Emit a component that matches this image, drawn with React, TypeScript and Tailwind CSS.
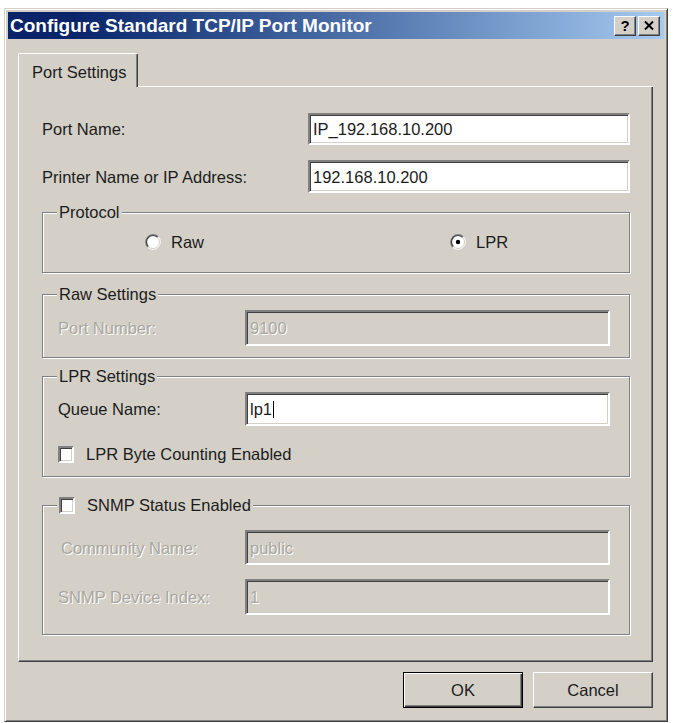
import React from 'react';

// classic win2000 look: face #d4d0c8, shadow #808080, dark #404040
const sunken =
  'border-2 border-[#808080] border-r-white border-b-white shadow-[inset_1px_1px_0_#404040,inset_-1px_-1px_0_#d4d0c8]';

const etched =
  'border border-[#808080] shadow-[inset_1px_1px_0_#fff,1px_1px_0_#fff]';

const dimText = 'text-[#aaa7a0] [text-shadow:1px_1px_0_#fff]';

interface FieldProps {
  value: string;
  disabled?: boolean;
  caret?: boolean;
  className?: string;
}

const Field: React.FC<FieldProps> = ({ value, disabled, caret, className }) => (
  <div
    className={`${sunken} flex items-center pl-[3px] ${disabled ? 'bg-[#d4d0c8]' : 'bg-white'} ${className ?? ''}`}
  >
    <span className={disabled ? dimText : 'text-[#1c1c1c]'}>{value}</span>
    {caret && <span className="ml-[1px] h-[17px] w-[1px] bg-black" />}
  </div>
);

const Radio = ({ checked }: { checked?: boolean }) => (
  <svg width="16" height="16" viewBox="0 0 16 16" className="shrink-0">
    <circle cx="8" cy="8" r="7" fill="#fff" />
    <path d="M2.7 13.3 A7.5 7.5 0 0 1 13.3 2.7" stroke="#808080" strokeWidth="1.2" fill="none" />
    <path d="M3.4 12.6 A6.5 6.5 0 0 1 12.6 3.4" stroke="#404040" strokeWidth="1.2" fill="none" />
    <path d="M13.3 2.7 A7.5 7.5 0 0 1 2.7 13.3" stroke="#fff" strokeWidth="1" fill="none" />
    <path d="M12.6 3.4 A6.5 6.5 0 0 1 3.4 12.6" stroke="#d4d0c8" strokeWidth="1" fill="none" />
    {checked && <circle cx="8" cy="8" r="2.2" fill="#000" />}
  </svg>
);

const Checkbox = () => <div className={`${sunken} h-[17px] w-[16px] shrink-0 bg-white`} />;

const CaptionButton = ({ children }: { children: React.ReactNode }) => (
  <div className="flex h-[20px] w-[22px] items-center justify-center border border-t-white border-l-white border-r-[#404040] border-b-[#404040] bg-[#d4d0c8] shadow-[inset_-1px_-1px_0_#808080]">
    {children}
  </div>
);

export default function App() {
  return (
    <div className="min-h-screen bg-white pl-[4px] pt-[8px] font-['Liberation_Sans',Arial,sans-serif] text-[16.5px] leading-[18px] text-[#1c1c1c]">
      <div className="flex h-[714px] w-[664px] flex-col border border-[#d4d0c8] border-r-[#404040] border-b-[#404040] bg-[#d4d0c8] p-[3px] shadow-[inset_1px_1px_0_#fff,inset_-1px_-1px_0_#808080]">
        {/* title bar */}
        <div className="flex h-[27px] shrink-0 items-center bg-linear-to-r from-[#0a246a] from-10% to-[#a6caf0] pl-[2px] pr-[4px]">
          <span className="text-[19px] font-bold text-white">
            Configure Standard TCP/IP Port Monitor
          </span>
          <div className="ml-auto flex gap-[2px]">
            <CaptionButton>
              <span className="text-[15px] font-bold leading-none text-black">?</span>
            </CaptionButton>
            <CaptionButton>
              <svg width="10" height="9" viewBox="0 0 10 9">
                <path d="M1 0.5 L9 8.5 M9 0.5 L1 8.5" stroke="#000" strokeWidth="2" />
              </svg>
            </CaptionButton>
          </div>
        </div>

        <div className="flex flex-1 flex-col pl-[10px] pr-[11px]">
          {/* tabs */}
          <div className="mt-[14px] flex h-[34px] shrink-0">
            <div className="flex w-[120px] items-center rounded-t-[2px] border-t border-l border-white border-r border-r-[#404040] pl-[13px] pt-[2px] shadow-[inset_-1px_0_0_#808080]">
              Port Settings
            </div>
            <div className="flex-1 border-b border-white" />
          </div>

          {/* tab page */}
          <div className="flex h-[575px] shrink-0 flex-col border-l border-white border-r border-r-[#404040] border-b border-b-[#404040] pl-[23px] pr-[22px] pt-[26px] shadow-[inset_-1px_-1px_0_#808080]">
            <div className="flex items-center justify-between">
              <span>Port Name:</span>
              <Field value="IP_192.168.10.200" className="h-[32px] w-[322px]" />
            </div>
            <div className="mt-[15px] flex items-center justify-between">
              <span>Printer Name or IP Address:</span>
              <Field value="192.168.10.200" className="h-[33px] w-[322px]" />
            </div>

            <fieldset className={`${etched} mt-[10px] px-[14px] pb-[20px]`}>
              <legend className="bg-[#d4d0c8] px-[2px]">Protocol</legend>
              <div className="mt-[11px] flex h-[20px] items-center">
                <div className="ml-[88px] flex w-[305px] items-center gap-[10px]">
                  <Radio />
                  <span>Raw</span>
                </div>
                <div className="flex items-center gap-[10px]">
                  <Radio checked />
                  <span>LPR</span>
                </div>
              </div>
            </fieldset>

            <fieldset className={`${etched} mt-[12px] px-[14px] pb-[11px]`}>
              <legend className="bg-[#d4d0c8] px-[2px]">Raw Settings</legend>
              <div className="mt-[7px] flex items-center">
                <span className={`w-[188px] pl-[1px] ${dimText}`}>Port Number:</span>
                <Field value="9100" disabled className="h-[36px] w-[365px]" />
              </div>
            </fieldset>

            <fieldset className={`${etched} mt-[9px] px-[14px] pb-[12px]`}>
              <legend className="bg-[#d4d0c8] px-[2px]">LPR Settings</legend>
              <div className="mt-[7px] flex items-center">
                <span className="w-[188px] pl-[1px]">Queue Name:</span>
                <Field value="lp1" caret className="h-[34px] w-[365px]" />
              </div>
              <div className="mt-[18px] flex h-[20px] items-center gap-[12px] pl-[1px]">
                <Checkbox />
                <span>LPR Byte Counting Enabled</span>
              </div>
            </fieldset>

            <fieldset className={`${etched} mt-[18px] px-[14px] pb-[19px]`}>
              <legend className="bg-[#d4d0c8] px-[2px]">
                <div className="flex h-[20px] items-center gap-[12px]">
                  <Checkbox />
                  <span>SNMP Status Enabled</span>
                </div>
              </legend>
              <div className="mt-[15px] flex items-center">
                <span className={`w-[188px] pl-[4px] ${dimText}`}>Community Name:</span>
                <Field value="public" disabled className="h-[35px] w-[365px]" />
              </div>
              <div className="mt-[14px] flex items-center">
                <span className={`w-[188px] pl-[1px] ${dimText}`}>SNMP Device Index:</span>
                <Field value="1" disabled className="h-[36px] w-[365px]" />
              </div>
            </fieldset>
          </div>

          {/* buttons */}
          <div className="mt-[10px] flex justify-end gap-[10px]">
            <button className="flex h-[36px] w-[120px] items-center justify-center border border-black bg-[#d4d0c8] shadow-[inset_1px_1px_0_#fff,inset_-1px_-1px_0_#404040,inset_-2px_-2px_0_#808080]">
              OK
            </button>
            <button className="flex h-[36px] w-[120px] items-center justify-center border border-t-white border-l-white border-r-[#404040] border-b-[#404040] bg-[#d4d0c8] shadow-[inset_-1px_-1px_0_#808080]">
              Cancel
            </button>
          </div>
        </div>
      </div>
    </div>
  );
}
